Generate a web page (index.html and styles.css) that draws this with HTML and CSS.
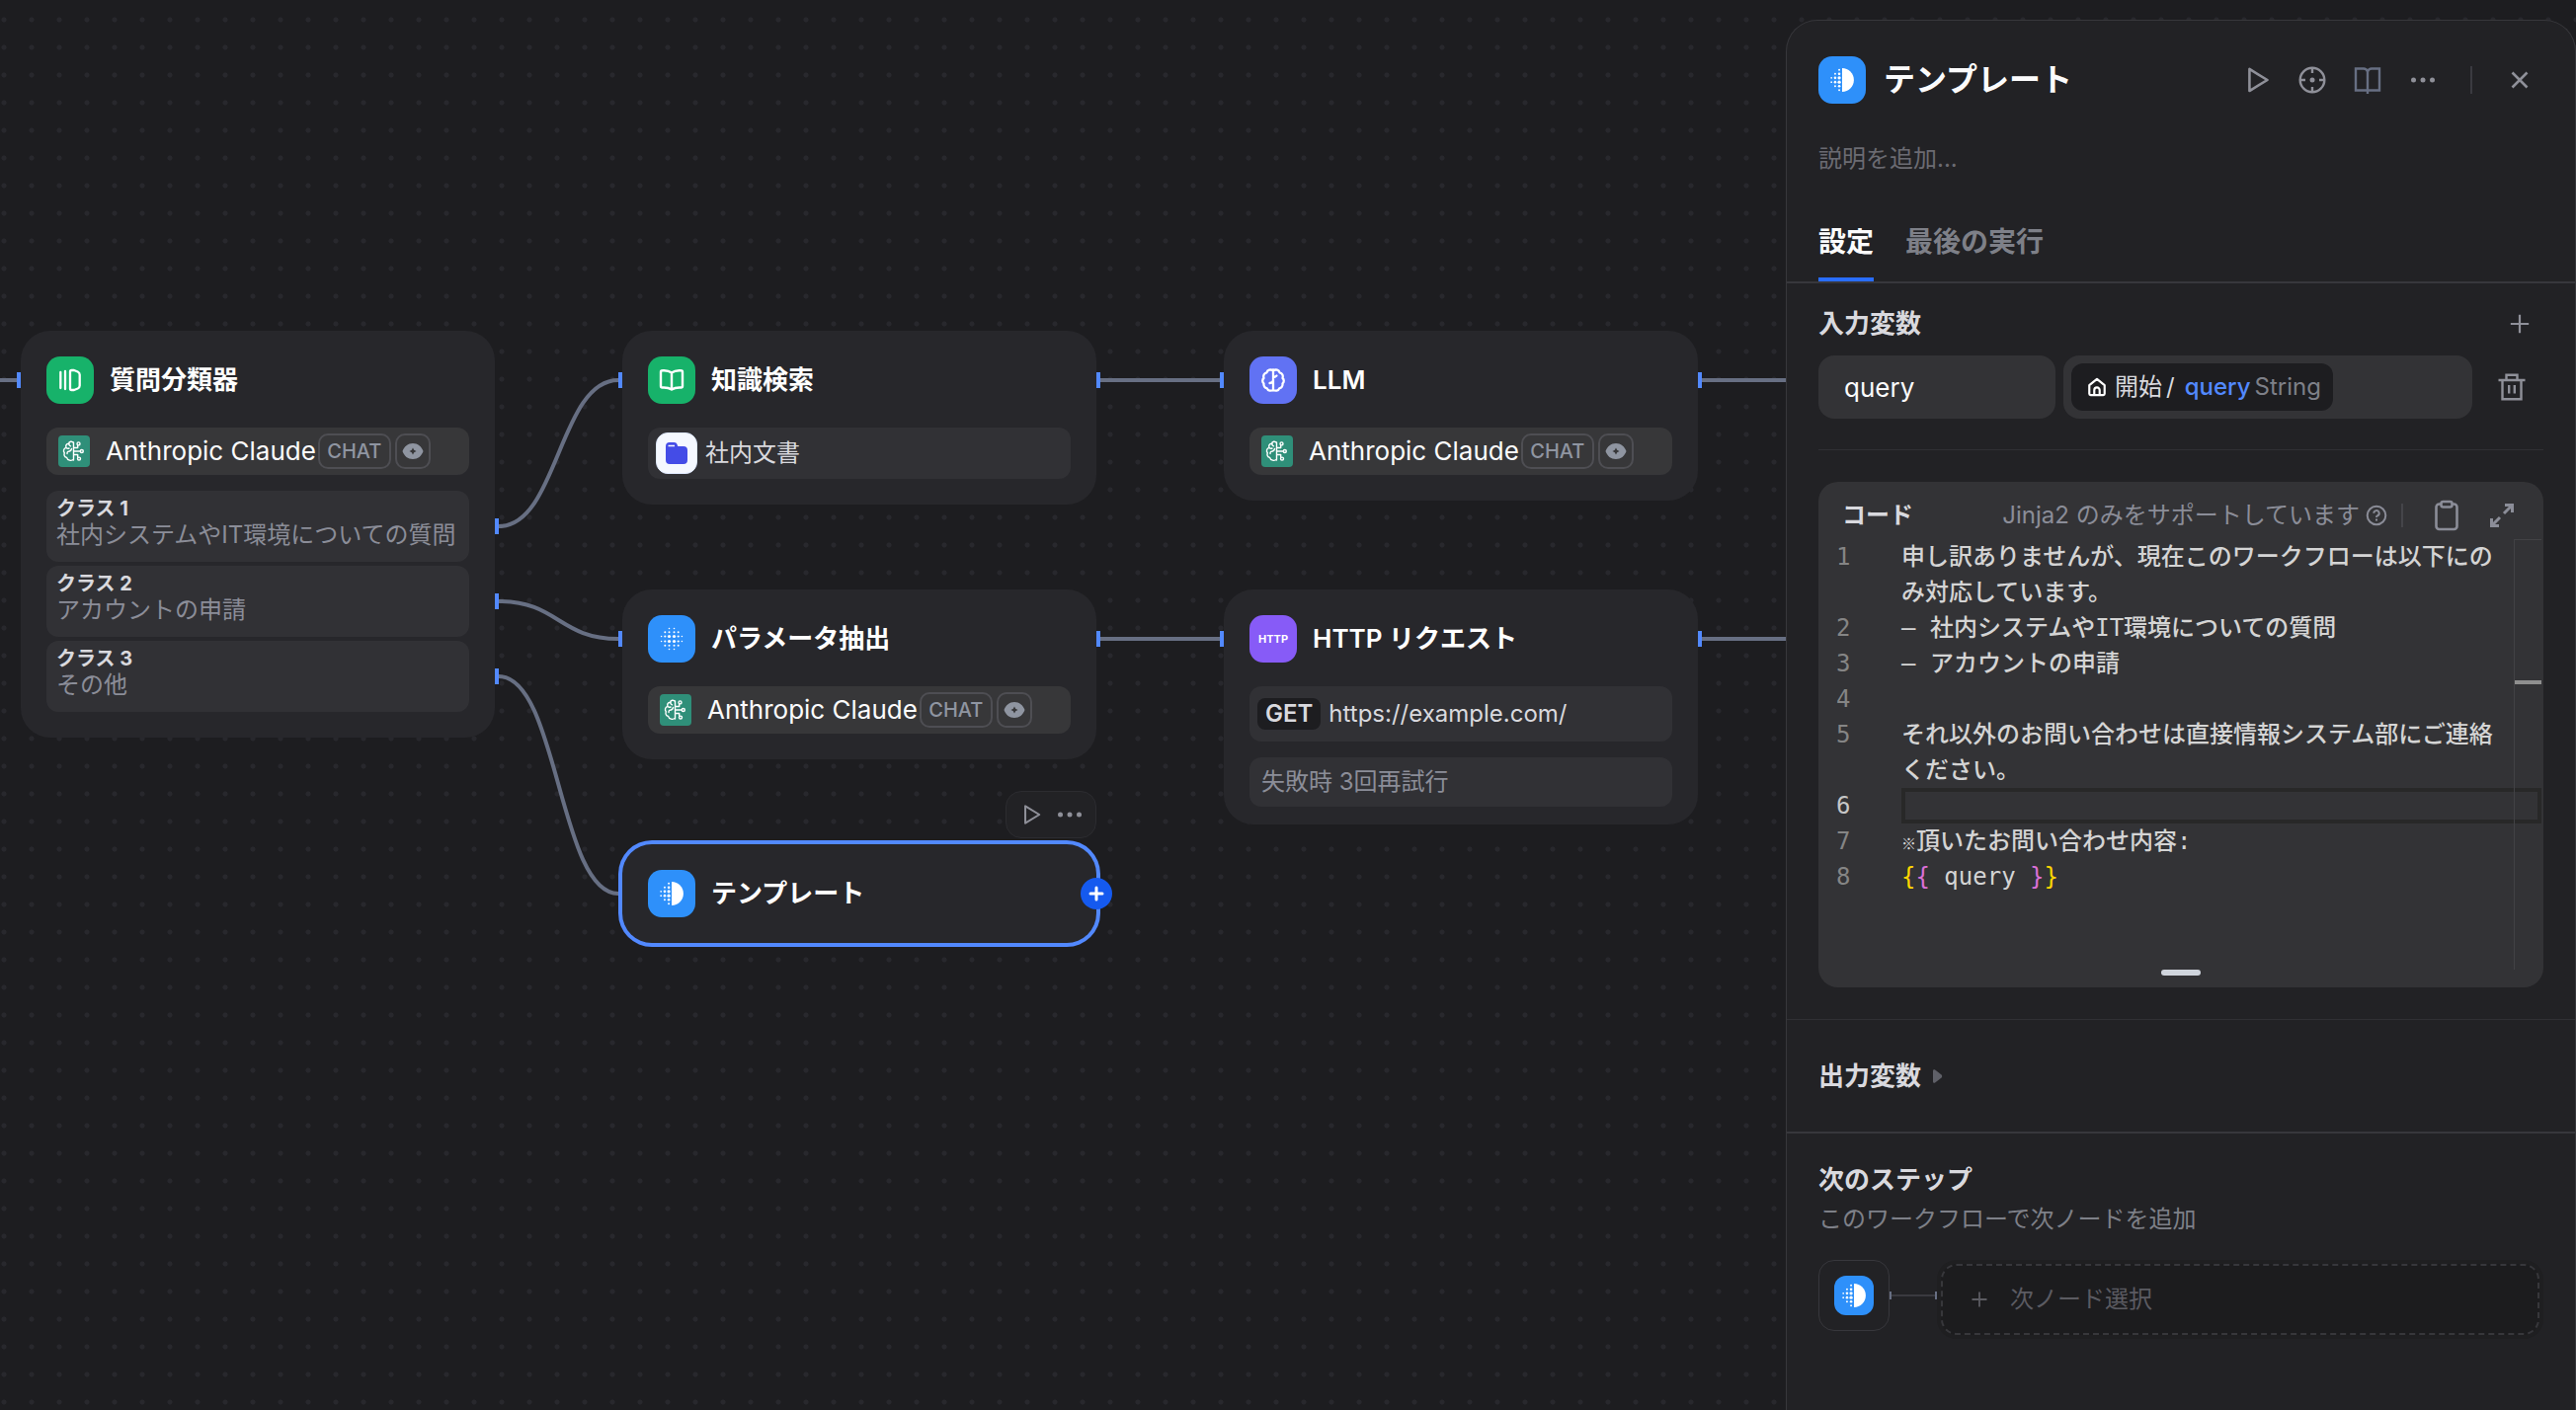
FILE: index.html
```html
<!DOCTYPE html>
<html lang="ja">
<head>
<meta charset="utf-8">
<title>ワークフロー</title>
<link rel="stylesheet" href="styles.css">
</head>
<body>
<svg class="defs" aria-hidden="true">
  <symbol id="i-brain" viewBox="0 0 32 32">
    <rect width="32" height="32" rx="4" fill="#2f8f79"/>
    <g fill="none" stroke="#fff" stroke-width="1.4" stroke-linecap="round" stroke-linejoin="round">
      <path d="M15.500 7v18M15.500 7.500c-1.500-2-4.500-1.500-5 .8-2.400.2-3.300 2.200-2.500 4-2.600.8-3.300 3.600-1.700 5.500-.9 2 .1 4.200 2.300 4.600.5 2.800 4.800 4 6.900 1.700M11 7.800c-.4 1.500.2 2.600 1.500 3M8 12.500c1 .9 2 1 3 .5M9 18.500c-.2-1.700 1-2.700 2.600-2.500M13.500 13.500c-.3 1.500-1.200 2.300-2.300 2.500M15.500 12.500h4.200V10M15.500 16h6.500M15.500 19.500h4.200V22"/>
      <circle cx="20.500" cy="8.400" r="1.500"/><circle cx="23.800" cy="16" r="1.500"/><circle cx="21" cy="23.600" r="1.500"/>
    </g>
  </symbol>
  <symbol id="i-half" viewBox="0 0 24 24">
    <path d="M12 1c6 0 11 4.900 11 11s-5 11-11 11z" fill="#fff"/>
    <g fill="#fff">
      <circle cx="9.300" cy="2.600" r=".9"/><circle cx="9.300" cy="6.300" r="1.200"/><circle cx="9.300" cy="10" r="1.500"/><circle cx="9.300" cy="14" r="1.500"/><circle cx="9.300" cy="17.700" r="1.200"/><circle cx="9.300" cy="21.400" r=".9"/>
      <circle cx="5.500" cy="6.300" r=".9"/><circle cx="5.500" cy="10" r="1.200"/><circle cx="5.500" cy="14" r="1.200"/><circle cx="5.500" cy="17.700" r=".9"/>
      <circle cx="2" cy="10" r=".8"/><circle cx="2" cy="14" r=".8"/>
    </g>
  </symbol>
  <symbol id="i-eye" viewBox="0 0 22 18">
    <path fill="#8f95a1" fill-rule="evenodd" d="M11 1c5 0 8.700 3 10.500 8-1.800 5-5.500 8-10.500 8S2.300 14 .5 9C2.300 4 6 1 11 1zm0 4.500L9.800 7.800 7.500 9l2.300 1.200L11 12.500l1.200-2.300L14.500 9l-2.300-1.200z"/>
  </symbol>
  <symbol id="i-play" viewBox="0 0 24 24"><path d="M5.500 2.500v19L21 12z" fill="none" stroke="currentColor" stroke-width="2.200" stroke-linejoin="round"/></symbol>
  <symbol id="i-dots" viewBox="0 0 24 24"><g fill="currentColor"><circle cx="2.500" cy="12" r="2.500"/><circle cx="12" cy="12" r="2.500"/><circle cx="21.500" cy="12" r="2.500"/></g></symbol>
  <symbol id="i-plus" viewBox="0 0 24 24"><path d="M12 2v20M2 12h20" fill="none" stroke="currentColor" stroke-width="2.400"/></symbol>
</svg>

<main class="canvas">
  <svg class="edges" aria-hidden="true">
    <path d="M0 385H18"/>
    <path d="M505 533C565 533 566 385 626 385"/>
    <path d="M505 609C565 609 566 647 626 647"/>
    <path d="M505 685C565 685 566 905 626 905"/>
    <path d="M1114 385H1236M1114 647H1236M1722 385H1830M1722 647H1830"/>
  </svg>

  <article class="node node-classifier">
    <i class="port port-in"></i>
    <header class="node-head">
      <span class="badge green"><svg width="28" height="28" viewBox="0 0 28 28" fill="none" stroke="#fff" stroke-width="2.300" stroke-linecap="round" stroke-linejoin="round"><path d="M4.300 6v16M9 5v18M15.500 4H18l3.700 1.500c1.300.6 2 1.400 2 3v11c0 1.600-.7 2.400-2 3L18 24h-2.500c-1 0-1.500-.5-1.500-1.500v-17C14 4.500 14.500 4 15.500 4z"/></svg></span>
      <h2>質問分類器</h2>
    </header>
    <div class="model"><svg class="brain"><use href="#i-brain"/></svg><span>Anthropic Claude</span><b class="tag">CHAT</b><b class="tag eye"><svg><use href="#i-eye"/></svg></b></div>
    <div class="classes">
      <div class="class"><i class="port port-out"></i><strong>クラス 1</strong><span>社内システムやIT環境についての質問</span></div>
      <div class="class"><i class="port port-out"></i><strong>クラス 2</strong><span>アカウントの申請</span></div>
      <div class="class"><i class="port port-out"></i><strong>クラス 3</strong><span>その他</span></div>
    </div>
  </article>

  <article class="node node-knowledge">
    <i class="port port-in"></i><i class="port port-next"></i>
    <header class="node-head">
      <span class="badge green"><svg width="28" height="28" viewBox="0 0 28 28" fill="none" stroke="#fff" stroke-width="2.400" stroke-linejoin="round"><path d="M14 6.500C11.500 4.600 8 4 4.500 4.300c-1 0-1.500.6-1.500 1.500V20c0 1 .5 1.500 1.500 1.500 3.500-.2 7 .3 9.500 2 2.500-1.700 6-2.200 9.500-2 1 0 1.500-.5 1.500-1.500V5.800c0-.9-.5-1.500-1.500-1.500C20 4 16.500 4.600 14 6.500zM14 6.500v17"/></svg></span>
      <h2>知識検索</h2>
    </header>
    <div class="dataset"><span class="folder"><svg width="24" height="24" viewBox="0 0 24 24"><path fill="#444ce7" d="M1 5a4 4 0 0 1 4-4h4.500c1.500 0 2.500.8 3 2l.8 2H19a4 4 0 0 1 4 4v10a4 4 0 0 1-4 4H5a4 4 0 0 1-4-4z"/><path d="M3.500 4.500H10" stroke="#f5f8ff" stroke-width="1.500"/></svg></span><span>社内文書</span></div>
  </article>

  <article class="node node-llm">
    <i class="port port-in"></i><i class="port port-next"></i>
    <header class="node-head">
      <span class="badge indigo"><svg width="28" height="28" viewBox="0 0 28 28" fill="none" stroke="#fff" stroke-width="2.300" stroke-linecap="round" stroke-linejoin="round"><path d="M14 3.500v21M14 4.500c-2.500-2-6-.8-6.500 1.800C4.700 7 3.500 9.500 4.500 12c-1.700 1.400-1.700 4 0 5.300-.5 2.700 1 4.600 3.300 5 .8 2.500 4.200 3.200 6.200 1.200 2 2 5.400 1.300 6.200-1.200 2.300-.4 3.800-2.300 3.300-5 1.700-1.300 1.700-3.900 0-5.300 1-2.500-.2-5-3-5.700C20 3.700 16.500 2.500 14 4.500zM10.500 17c2-.3 3.500-1.300 3.500-3M14 11c1.500 0 2.500-.5 3.500-1.500"/></svg></span>
      <h2>LLM</h2>
    </header>
    <div class="model"><svg class="brain"><use href="#i-brain"/></svg><span>Anthropic Claude</span><b class="tag">CHAT</b><b class="tag eye"><svg><use href="#i-eye"/></svg></b></div>
  </article>

  <article class="node node-params">
    <i class="port port-in"></i><i class="port port-next"></i>
    <header class="node-head">
      <span class="badge blue"><svg width="24" height="24" viewBox="0 0 24 24" fill="#fff"><circle cx="9.500" cy="1.500" r=".8"/><circle cx="14.500" cy="1.500" r=".8"/><circle cx="5.300" cy="5.200" r="1"/><circle cx="9.500" cy="5.200" r="1"/><circle cx="14.500" cy="5.200" r="1"/><circle cx="18.700" cy="5.200" r="1"/><circle cx="1.600" cy="9.500" r=".8"/><circle cx="5.300" cy="9.500" r="1.100"/><circle cx="9.500" cy="9.500" r="1.600"/><circle cx="14.500" cy="9.500" r="1.600"/><circle cx="18.700" cy="9.500" r="1.100"/><circle cx="22.400" cy="9.500" r=".8"/><circle cx="1.600" cy="14.500" r=".8"/><circle cx="5.300" cy="14.500" r="1.100"/><circle cx="9.500" cy="14.500" r="1.600"/><circle cx="14.500" cy="14.500" r="1.600"/><circle cx="18.700" cy="14.500" r="1.100"/><circle cx="22.400" cy="14.500" r=".8"/><circle cx="5.300" cy="18.800" r="1"/><circle cx="9.500" cy="18.800" r="1"/><circle cx="14.500" cy="18.800" r="1"/><circle cx="18.700" cy="18.800" r="1"/><circle cx="9.500" cy="22.500" r=".8"/><circle cx="14.500" cy="22.500" r=".8"/></svg></span>
      <h2>パラメータ抽出</h2>
    </header>
    <div class="model"><svg class="brain"><use href="#i-brain"/></svg><span>Anthropic Claude</span><b class="tag">CHAT</b><b class="tag eye"><svg><use href="#i-eye"/></svg></b></div>
  </article>

  <article class="node node-http">
    <i class="port port-in"></i><i class="port port-next"></i>
    <header class="node-head">
      <span class="badge violet">HTTP</span>
      <h2>HTTP リクエスト</h2>
    </header>
    <div class="request"><b>GET</b><span>https://example.com/</span></div>
    <div class="retry">失敗時 3回再試行</div>
  </article>

  <article class="node node-template selected">
    <header class="node-head">
      <span class="badge blue"><svg width="26" height="26"><use href="#i-half"/></svg></span>
      <h2>テンプレート</h2>
    </header>
    <div class="node-tools">
      <button type="button" aria-label="実行"><svg width="22" height="22"><use href="#i-play"/></svg></button>
      <button type="button" aria-label="その他"><svg width="24" height="24"><use href="#i-dots"/></svg></button>
    </div>
    <button type="button" class="add-next" aria-label="次のノードを追加"><svg width="16" height="16" viewBox="0 0 16 16" stroke="#fff" stroke-width="3" stroke-linecap="round"><path d="M8 2v12M2 8h12"/></svg></button>
  </article>
</main>

<aside class="panel">
  <header class="panel-head">
    <span class="badge blue"><svg width="26" height="26"><use href="#i-half"/></svg></span>
    <h1>テンプレート</h1>
    <div class="actions">
      <button type="button" aria-label="実行"><svg width="28" height="28"><use href="#i-play"/></svg></button>
      <button type="button" aria-label="位置"><svg width="28" height="28" viewBox="0 0 28 28" fill="none" stroke="currentColor" stroke-width="2.400"><circle cx="14" cy="14" r="12.300"/><path d="M14 1.500v5.500M14 21v5.500M1.500 14H7M21 14h5.500"/><circle cx="14" cy="14" r="2.500" fill="currentColor" stroke="none"/></svg></button>
      <a href="#docs" class="docs" aria-label="ドキュメント"><svg width="28" height="28" viewBox="0 0 28 28" fill="none" stroke="currentColor" stroke-width="2.400"><path d="M14 5v23M14 5.500c-.8-2-2-3-4-3H2v22h24v-22h-8c-2 0-3.200 1-4 3z"/></svg></a>
      <button type="button" aria-label="メニュー"><svg width="24" height="24"><use href="#i-dots"/></svg></button>
    </div>
    <i class="bar"></i>
    <button type="button" class="close" aria-label="閉じる"><svg width="18" height="18" viewBox="0 0 18 18" stroke="currentColor" stroke-width="2.600"><path d="M1.500 1.500l15 15M16.500 1.500l-15 15"/></svg></button>
  </header>
  <input class="desc" type="text" placeholder="説明を追加..." aria-label="説明">
  <nav class="tabs"><button type="button" class="on">設定</button><button type="button">最後の実行</button></nav>

  <section class="inputs">
    <div class="section-head"><h3>入力変数</h3><button type="button" aria-label="変数を追加"><svg width="22" height="22"><use href="#i-plus"/></svg></button></div>
    <div class="variable">
      <input class="var-name" type="text" value="query" aria-label="変数名">
      <button type="button" class="var-value"><span class="chip"><svg width="20" height="20" viewBox="0 0 22 22" fill="none" stroke="#fff" stroke-width="2.400" stroke-linejoin="round"><path d="M2.500 9L11 2l8.500 7v9.500a1.500 1.500 0 0 1-1.500 1.500H4a1.500 1.500 0 0 1-1.500-1.500zM8 20v-5.500a3 3 0 0 1 6 0V20"/></svg><span class="src">開始</span><span class="slash">/</span><span class="ref">query</span><span class="type">String</span></span></button>
      <button type="button" class="trash" aria-label="削除"><svg width="28" height="28" viewBox="0 0 28 28" fill="none" stroke="currentColor" stroke-width="2.400"><path d="M.5 7h27M4.500 7v19.300h19V7M8.500 7V1.700h11V7M11.200 12v8.500M16.800 12v8.500"/></svg></button>
    </div>
  </section>

  <section class="code">
    <header class="code-head">
      <h3>コード</h3>
      <span class="hint">Jinja2 のみをサポートしています</span>
      <svg class="help" width="22" height="22" viewBox="0 0 22 22" fill="none" stroke="currentColor" stroke-width="2"><circle cx="11" cy="11" r="9.300"/><path d="M8.300 8.800a2.700 2.700 0 1 1 3.900 2.400c-.8.400-1.200.9-1.200 1.800M11 14.500v2"/></svg>
      <i class="bar"></i>
      <button type="button" aria-label="コピー"><svg width="26" height="32" viewBox="0 0 26 32" fill="none" stroke="currentColor" stroke-width="2.600" stroke-linejoin="round"><path d="M7 4.500H5.500a3 3 0 0 0-3 3V27a3 3 0 0 0 3 3h15a3 3 0 0 0 3-3V7.500a3 3 0 0 0-3-3H19"/><rect x="7.500" y="2" width="11" height="5.500" rx="2"/></svg></button>
      <button type="button" aria-label="拡大"><svg width="26" height="26" viewBox="0 0 26 26" fill="none" stroke="currentColor" stroke-width="3"><path d="M16 2.500h7.500V10M23.500 2.500L15 11M2.500 16v7.500H10M2.500 23.500L11 15"/></svg></button>
    </header>
    <div class="editor">
      <ol class="lines">
        <li>申し訳ありませんが、現在このワークフローは以下にのみ対応しています。</li>
        <li>– 社内システムやIT環境についての質問</li>
        <li>– アカウントの申請</li>
        <li></li>
        <li>それ以外のお問い合わせは直接情報システム部にご連絡ください。</li>
        <li class="current"></li>
        <li><span class="mark">※</span>頂いたお問い合わせ内容:</li>
        <li><span class="y">{</span><span class="p">{</span> query <span class="p">}</span><span class="y">}</span></li>
      </ol>
      <div class="ruler"></div>
    </div>
    <div class="grip"></div>
  </section>

  <section class="outputs"><button type="button"><h3>出力変数</h3><svg width="10" height="14" viewBox="0 0 10 14"><path d="M0 1.500C0 .4 1.200-.2 2.100.5l6.500 5c.8.600.8 2.400 0 3l-6.500 5c-.9.700-2.100.1-2.100-1z" fill="#5f6068"/></svg></button></section>

  <section class="next">
    <h3>次のステップ</h3>
    <p>このワークフローで次ノードを追加</p>
    <div class="next-row">
      <span class="self"><span class="badge blue small"><svg width="26" height="26"><use href="#i-half"/></svg></span></span>
      <i class="link"></i>
      <div class="slot"><button type="button"><svg width="18" height="18"><use href="#i-plus"/></svg><span>次ノード選択</span></button></div>
    </div>
  </section>
</aside>
</body>
</html>
```
FILE: styles.css
```css
* { box-sizing: border-box; }
html, body { height: 100%; }
body {
  margin: 0;
  display: flex;
  justify-content: flex-end;
  position: relative;
  overflow: hidden;
  background: #1d1d20;
  color: #fff;
  font: 24px/32px Inter, "Noto Sans CJK JP", sans-serif;
}
h1, h2, h3, p, ol { margin: 0; padding: 0; font-size: inherit; }
button { border: 0; padding: 0; background: none; color: inherit; font: inherit; display: flex; align-items: center; cursor: pointer; }
input { border: 0; background: none; color: inherit; font: inherit; min-width: 0; }
svg { display: block; flex: none; }
.defs { position: absolute; width: 0; height: 0; }

/* Canvas */
.canvas {
  position: absolute;
  inset: 0;
  background: radial-gradient(circle at 14px 14px, #28282d 2px, transparent 3px) -10px 6px / 28px 28px;
}
.edges { position: absolute; inset: 0; width: 100%; height: 100%; fill: none; stroke: #676f83; stroke-width: 4; }

.node {
  position: absolute;
  width: 480px;
  padding: 26px;
  border-radius: 30px;
  background: #27272b;
}
.node-classifier { left: 21px; top: 335px; }
.node-knowledge { left: 630px; top: 335px; }
.node-llm { left: 1239px; top: 335px; }
.node-params { left: 630px; top: 597px; }
.node-http { left: 1239px; top: 597px; padding-bottom: 18px; }
.node-template { left: 630px; top: 855px; }
.selected { box-shadow: 0 0 0 4px #5289ff; }

.node-head { display: flex; align-items: center; gap: 16px; height: 48px; }
.node-head h2 { font-size: 26px; font-weight: 600; }

.badge {
  display: flex; align-items: center; justify-content: center; flex: none;
  width: 48px; height: 48px; border-radius: 14px;
}
.badge.small { width: 40px; height: 40px; border-radius: 12px; }
.green { background: #17b26a; }
.blue { background: #2e90fa; }
.indigo { background: #6172f3; }
.violet { background: #875bf7; font-size: 11px; font-weight: 700; }

.port { position: absolute; width: 4px; height: 16px; background: #5289ff; top: 42px; }
.port-in { left: -4px; }
.port-next { right: -4px; }
.port-out { right: -30px; top: 28px; }

.model {
  display: flex; align-items: center;
  height: 48px; margin-top: 24px; padding-left: 12px;
  border-radius: 12px; background: #373739;
  font-size: 26px; color: #fbfbfc;
}
.brain { width: 32px; height: 32px; margin-right: 16px; }
.tag {
  display: flex; align-items: center; justify-content: center;
  height: 36px; width: 74px; margin-left: 2px;
  border: 2px solid #4e4e53; border-radius: 10px;
  font-size: 20px; font-weight: 500; color: #8f95a1;
}
.tag.eye { width: 36px; margin-left: 4px; }
.tag svg { width: 22px; height: 18px; }

.classes { display: grid; gap: 4px; margin-top: 16px; }
.class {
  position: relative; display: flex; flex-direction: column;
  height: 72px; padding: 5px 10px; border-radius: 12px;
  background: #313135; color: #8b8d98;
}
.class strong { font-size: 20px; line-height: 26px; font-weight: 700; color: #d9d9de; }
.class span { line-height: 28px; white-space: nowrap; }

.dataset {
  display: flex; align-items: center; gap: 8px;
  height: 52px; margin-top: 24px; padding-left: 8px;
  border-radius: 12px; background: #313135; color: #d9d9de;
}
.folder {
  display: flex; align-items: center; justify-content: center;
  width: 42px; height: 42px; border-radius: 12px;
  border: 1px solid #e0eaff; background: #f5f8ff;
}
.request {
  display: flex; align-items: center; gap: 8px;
  height: 56px; margin-top: 24px; padding: 0 8px;
  border-radius: 12px; background: #313135; color: #d9d9de;
}
.request b { padding: 0 8px; border-radius: 8px; background: #1d1d20; font-weight: 600; }
.retry {
  height: 50px; margin-top: 16px; padding: 0 12px; line-height: 50px;
  border-radius: 12px; background: #313135; color: #8b8d98;
}

.node-tools {
  position: absolute; right: 0; top: -54px;
  display: flex; align-items: center; justify-content: space-between;
  width: 92px; height: 48px; padding: 0 14px;
  border: 1px solid #2c2c30; border-radius: 16px; background: #222225; color: #8f9099;
}
.add-next {
  position: absolute; right: -16px; top: 34px;
  width: 32px; height: 32px; justify-content: center;
  border-radius: 50%; background: #155aef;
}

/* Settings panel */
.panel {
  position: relative;
  width: 800px; margin-top: 20px;
  border: 1px solid #37373b; border-bottom: 0;
  border-radius: 32px 32px 0 0;
  background: #222225; color: #d9d9de;
}
.panel h3 { font-size: 26px; line-height: 34px; font-weight: 700; }
.panel-head { display: flex; align-items: center; gap: 16px; padding: 36px 32px 0; height: 84px; }
.panel-head h1 { flex: 1; padding-left: 2px; font-size: 32px; font-weight: 700; color: #fbfbfc; }
.actions { display: flex; gap: 8px; color: #8f9099; }
.actions > *, .close { display: flex; align-items: center; justify-content: center; width: 48px; height: 48px; }
.actions .docs { color: #676f83; }
.panel-head .bar { width: 2px; height: 28px; margin: 0 8px; background: #3a3a40; }
.close { color: #8f9099; }
.desc { display: block; width: 100%; height: 32px; margin-top: 40px; padding: 0 32px; outline: 0; }
.desc::placeholder { color: #6b6b72; opacity: 1; }
.tabs { display: flex; gap: 32px; margin-top: 48px; padding: 0 32px; border-bottom: 2px solid #37373c; }
.tabs button { height: 60px; padding-bottom: 16px; border-bottom: 4px solid transparent; font-size: 28px; font-weight: 700; color: #7e8088; }
.tabs .on { border-color: #296dff; color: #fbfbfc; }

.inputs { margin: 0 32px; padding: 21px 0 31px; border-bottom: 1px solid #303034; }
.section-head { display: flex; justify-content: space-between; align-items: center; height: 40px; }
.section-head button { width: 48px; height: 40px; justify-content: center; color: #8f9099; }
.variable { display: grid; grid-template-columns: 240px 1fr 64px; column-gap: 8px; margin-top: 12px; }
.var-name, .var-value { height: 64px; border-radius: 16px; background: #333336; }
.var-name { width: 100%; padding: 0 26px; font-size: 26px; color: #fbfbfc; }
.var-value { padding-left: 8px; }
.chip { display: flex; align-items: center; height: 48px; padding: 0 12px 0 16px; border-radius: 12px; background: #1d1d20; white-space: nowrap; }
.src { margin-left: 8px; }
.slash { margin: 0 10px 0 4px; }
.ref { color: #5289ff; font-weight: 500; }
.type { margin-left: 4px; color: #7e8088; }
.trash { justify-content: center; color: #8f9099; }

.code { margin: 32px 32px 0; height: 512px; display: flex; flex-direction: column; border-radius: 20px; background: #333336; }
.code-head { display: flex; align-items: center; height: 58px; padding: 10px 28px 0 24px; color: #8b8d98; }
.code-head h3 { font-size: 24px; margin-right: auto; color: #d9d9de; }
.help { margin: 0 14px 0 6px; }
.code-head .bar { width: 2px; height: 24px; background: #45454a; margin-right: 16px; }
.code-head button { width: 56px; height: 40px; justify-content: center; }
.code-head button:last-child { margin-right: -14px; }
.editor { display: flex; height: 436px; position: relative; }
.lines {
  flex: 1; list-style: none; counter-reset: n;
  font: 500 24px/36px "DejaVu Sans Mono", "Noto Sans CJK JP", monospace;
  color: #d4d4d4;
}
.lines li { counter-increment: n; position: relative; min-height: 36px; padding: 0 44px 0 84px; word-break: break-all; white-space: pre-wrap; }
.lines li::before { content: counter(n); position: absolute; left: 18px; color: #858585; }
.lines .current::before { color: #c6c6c6; }
.lines .current::after { content: ""; position: absolute; inset: 0 2px 0 84px; border: 4px solid #282828; }
.mark { font-size: 15px; line-height: 15px; }
.y { color: #ffd700; }
.p { color: #da70d6; }
.ruler { position: absolute; top: 0; bottom: 0; right: 2px; width: 28px; border: solid #424245; border-width: 1px 0 0 1px; }
.ruler::after { content: ""; position: absolute; left: 0; right: 0; top: 142px; height: 4px; background: #8f8f8f; }
.grip { align-self: center; width: 40px; height: 6px; border-radius: 3px; background: #d0d5dd; }

.outputs { display: flex; align-items: center; height: 114px; margin-top: 32px; padding: 0 32px; border-top: 1px solid #303034; }
.outputs button { gap: 12px; }
.next { padding: 30px 32px; border-top: 2px solid #37373c; }
.next p { margin-top: 6px; line-height: 34px; color: #7e8088; }
.next-row { display: flex; margin-top: 24px; }
.self { display: flex; align-items: center; justify-content: center; width: 72px; height: 72px; border: 1px solid #37373c; border-radius: 16px; }
.link { width: 48px; height: 8px; margin-top: 32px; border: solid #676f83; border-width: 0 2px; background: linear-gradient(#3a3a40, #3a3a40) center / 100% 2px no-repeat; }
.slot { flex: 1; padding: 4px; border-radius: 20px; background: #1f1f21; }
.slot button { width: 100%; height: 72px; gap: 22px; padding-left: 28px; border: 2px dashed #37373b; border-radius: 16px; background: #1c1c1e; color: #5b5b62; }
```
